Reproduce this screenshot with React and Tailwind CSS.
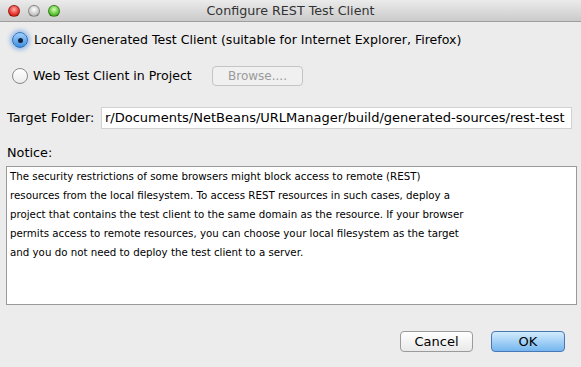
import React from "react";

const font = { fontFamily: '"DejaVu Sans", "Liberation Sans", sans-serif' };

const notice = [
    "The security restrictions of some browsers might block access to remote (REST)",
    "resources from the local filesystem. To access REST resources in such cases, deploy a",
    "project that contains the test client to the same domain as the resource. If your browser",
    "permits access to remote resources, you can choose your local filesystem as the target",
    "and you do not need to deploy the test client to a server.",
];

const Light = ({ color }) => (
    <div
        className={`w-[12px] h-[12px] rounded-full border border-black/30 ${color}`}
    />
);

const App = () => {
    return (
        <div className="w-[581px] h-[367px] bg-[#ececec] flex flex-col text-black" style={font}>
            <div className="h-[22px] flex items-center bg-gradient-to-b from-[#ebebeb] to-[#cbcbcb] border-b border-[#9f9f9f]">
                <div className="flex gap-[8px] pl-[8px] w-[72px]">
                    <Light color="bg-[radial-gradient(circle_at_50%_35%,#ffb0a8,#e8332a_60%,#a8120c)]" />
                    <Light color="bg-[radial-gradient(circle_at_50%_35%,#ffffff,#c9c9c9_60%,#8e8e8e)]" />
                    <Light color="bg-[radial-gradient(circle_at_50%_35%,#d6ffb8,#5cc532_60%,#2b7a12)]" />
                </div>
                <div className="flex-1 text-center text-[12.7px] text-[#333]">Configure REST Test Client</div>
                <div className="w-[72px]" />
            </div>

            <div className="flex items-center h-[20px] mt-[8px] pl-[12px]">
                <div className="w-[16px] h-[16px] rounded-full bg-gradient-to-b from-[#9fd0fb] to-[#3d8fe0] border border-[#2f6fb8] shadow-[0_0_4px_2px_rgba(90,150,230,0.6)] flex items-center justify-center">
                    <div className="w-[5px] h-[5px] rounded-full bg-[#14213a]" />
                </div>
                <span className="ml-[6px] text-[12.55px]">Locally Generated Test Client (suitable for Internet Explorer, Firefox)</span>
            </div>

            <div className="flex items-center h-[20px] mt-[16px] pl-[12px]">
                <div className="w-[16px] h-[16px] rounded-full bg-gradient-to-b from-white to-[#ececec] border border-[#8a8a8a]" />
                <span className="ml-[5px] w-[179px] text-[12.55px]">Web Test Client in Project</span>
                <div className="w-[91px] h-[20px] rounded-[4px] border border-[#c4c4c4] bg-[#f0f0f0] flex items-center justify-center text-[12px] text-[#9a9a9a]">
                    Browse....
                </div>
            </div>

            <div className="flex items-center mt-[21px] pl-[7px]">
                <span className="text-[12.8px] w-[94px]">Target Folder:</span>
                <div className="w-[471px] h-[22px] bg-white border border-[#d2d2d2] flex items-center pl-[3px] overflow-hidden whitespace-nowrap text-[13px]">
                    r/Documents/NetBeans/URLManager/build/generated-sources/rest-test
                </div>
            </div>

            <div className="mt-[16px] pl-[7px] text-[12.8px] leading-[16px]">Notice:</div>

            <div className="mt-[5px] ml-[6px] w-[571px] h-[139px] bg-white border border-[#9a9a9a] pl-[3px] pt-[0px] text-[10.25px] leading-[19px]">
                {notice.map((l) => (
                    <div key={l} className="whitespace-nowrap">{l}</div>
                ))}
            </div>

            <div className="flex justify-end gap-[18px] mt-[26px] pr-[16px]">
                <div className="w-[73px] h-[21px] rounded-[4px] border border-[#9b9b9b] bg-gradient-to-b from-white to-[#e9e9e9] flex items-center justify-center text-[13px]">
                    Cancel
                </div>
                <div className="w-[74px] h-[21px] rounded-[4px] border border-[#4a78b5] bg-gradient-to-b from-[#d2ebfd] to-[#73b6ee] flex items-center justify-center text-[13px]">
                    OK
                </div>
            </div>
        </div>
    );
};

export default App;
